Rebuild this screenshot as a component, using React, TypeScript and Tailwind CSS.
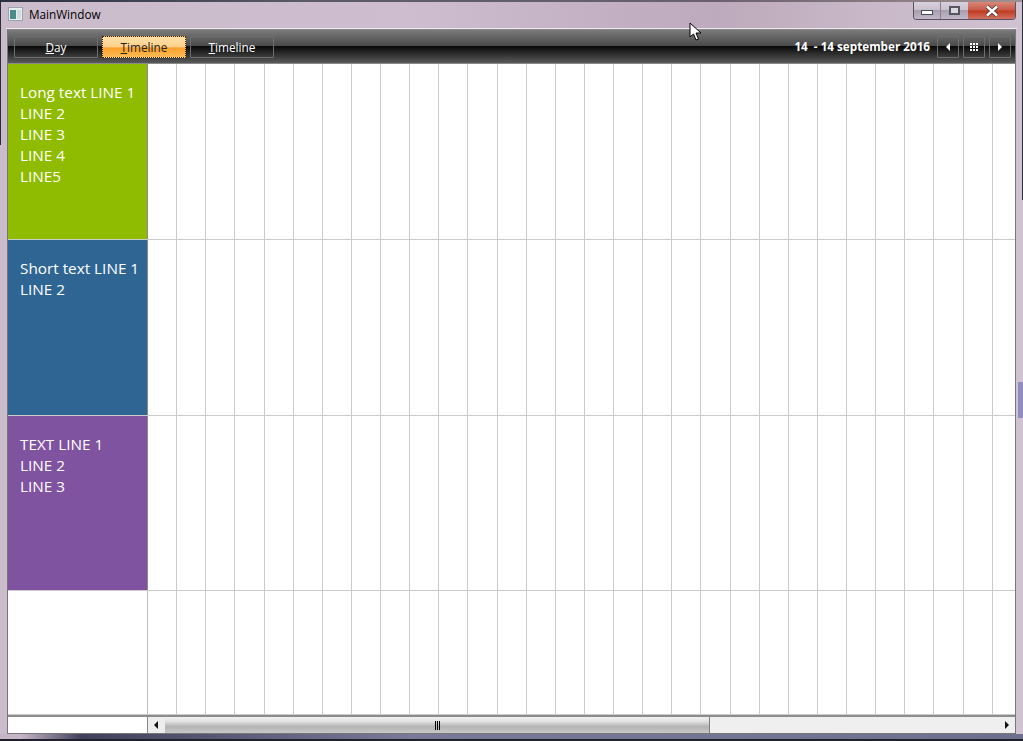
const columns = Array.from({ length: 30 }, (_, i) => i);

function Cells() {
  return (
    <div className="flex flex-1 overflow-hidden">
      {columns.map((c) => (
        <div key={c} className="w-[29.14px] shrink-0 border-r border-[#cbcbcb]" />
      ))}
    </div>
  );
}

function Row({ color, lines, className }: { color?: string; lines?: string[]; className: string }) {
  return (
    <div className={`flex border-b border-[#cbcbcb] ${className}`}>
      <div className={`w-[140px] shrink-0 border-r pl-[12px] pt-[18px] text-[15.3px] leading-[21px] text-white ${color ? `border-[#8a8a8a] ${color}` : "border-[#bdbdbd] bg-white"}`}>
        {lines?.map((l) => <div key={l}>{l}</div>)}
      </div>
      <Cells />
    </div>
  );
}

function ToolButton({ label, active, width }: { label: string; active?: boolean; width: string }) {
  return (
    <div
      className={`flex h-[22px] items-center justify-center border pt-[2px] text-[11.8px] ${width} ${
        active
          ? "border-dotted border-[#3a2a10] bg-[linear-gradient(#ffe0a8_0%,#ffcf8a_50%,#fb9f28_54%,#ffbb55_100%)] text-[#222]"
          : "rounded-[1px] border-[#6e6e6e] text-white"
      }`}
    >
      <span>
        <span className="underline">{label[0]}</span>
        {label.slice(1)}
      </span>
    </div>
  );
}

function NavButton({ children }: { children: React.ReactNode }) {
  return (
    <div className="flex h-[22px] w-[22px] items-center justify-center rounded-[1px] border border-[#6e6e6e]">
      {children}
    </div>
  );
}

export default function App() {
  return (
    <div className="relative flex h-[741px] w-[1023px] flex-col overflow-hidden bg-[linear-gradient(90deg,#cbbccb_0%,#cdbdcf_40%,#bdaabc_70%,#c8b8c8_85%,#d0c2d0_100%)] font-['Open_Sans',sans-serif]">
      {/* top edge */}
      <div className="h-[2px] bg-[linear-gradient(90deg,#2a3040_0%,#5a5a68_30%,#6a6070_70%,#a09090_100%)]" />
      {/* title bar */}
      <div className="flex h-[26px] items-start justify-between pl-[8px] pr-[7px]">
        <div className="flex items-center gap-[6px] pt-[4px]">
          <svg width="15" height="15" viewBox="0 0 15 15">
            <rect x="0.5" y="0.5" width="14" height="13" fill="#e8eef0" stroke="#9aa4aa" />
            <rect x="2" y="3" width="6" height="9" fill="#4a8a8a" />
            <rect x="9" y="3" width="4" height="9" fill="#d0dadf" />
          </svg>
          <span className="text-[11.75px] leading-[16px] text-black">MainWindow</span>
        </div>
        <div className="flex h-[18px] overflow-hidden rounded-b-[4px] border border-t-0 border-[#5a5060]">
          <div className="flex w-[27px] items-center justify-center border-r border-[#8a8090] bg-[linear-gradient(#d8d0dc_0%,#c8c0cc_48%,#a89eb0_50%,#c0b8c8_100%)]">
            <div className="mt-[4px] h-[5px] w-[12px] border border-[#4a4a50] bg-white" />
          </div>
          <div className="flex w-[27px] items-center justify-center bg-[linear-gradient(#d8d0dc_0%,#c8c0cc_48%,#a89eb0_50%,#c0b8c8_100%)]">
            <div className="h-[9px] w-[11px] border-2 border-[#56565e] bg-[#d8d8e0]" />
          </div>
          <div className="flex w-[47px] items-center justify-center bg-[linear-gradient(#d88878_0%,#c85848_48%,#c03a20_52%,#d07060_100%)]">
            <svg width="14" height="12" viewBox="0 0 14 12">
              <path d="M2 1.5 L12 10.5 M12 1.5 L2 10.5" stroke="#3a3a3a" strokeWidth="4" />
              <path d="M2 1.5 L12 10.5 M12 1.5 L2 10.5" stroke="#fff" strokeWidth="2.4" />
            </svg>
          </div>
        </div>
      </div>
      <div className="mx-[6px] h-px w-[1011px] bg-[#efe8ef]" />

      {/* client */}
      <div className="mx-[7px] flex h-[705px] w-[1009px] flex-col border-x border-b border-[#777] bg-white">
        {/* toolbar */}
        <div className="flex h-[35px] shrink-0 items-center justify-between border-b border-t border-[#8a8a8a] bg-[linear-gradient(#7a7a7a_0%,#4a4a4a_48%,#0a0a0a_50%,#1a1a1a_60%,#5a5a5a_100%)] pl-[6px] pr-[4px]">
          <div className="flex gap-[4px]">
            <ToolButton label="Day" width="w-[84px]" />
            <ToolButton label="Timeline" active width="w-[84px]" />
            <ToolButton label="Timeline" width="w-[84px]" />
          </div>
          <div className="flex items-center gap-[4px]">
            <span className="mr-[3px] whitespace-pre pt-[1px] text-[11.7px] font-bold text-white">14  - 14 september 2016</span>
            <NavButton>
              <svg width="6" height="8" viewBox="0 0 6 8"><path d="M5 0V8L1 4Z" fill="#fff" /></svg>
            </NavButton>
            <NavButton>
              <div className="grid h-[8px] w-[8px] grid-cols-3 grid-rows-3 gap-px">
                {Array.from({ length: 9 }, (_, i) => <div key={i} className="bg-white" />)}
              </div>
            </NavButton>
            <NavButton>
              <svg width="6" height="8" viewBox="0 0 6 8"><path d="M1 0V8L5 4Z" fill="#fff" /></svg>
            </NavButton>
          </div>
        </div>

        {/* rows */}
        <Row className="h-[176px] shrink-0" color="bg-[#8fbb00]" lines={["Long text LINE 1", "LINE 2", "LINE 3", "LINE 4", "LINE5"]} />
        <Row className="h-[176px] shrink-0" color="bg-[#2f6593]" lines={["Short text LINE 1", "LINE 2"]} />
        <Row className="h-[175px] shrink-0" color="bg-[#7f53a0]" lines={["TEXT LINE 1", "LINE 2", "LINE 3"]} />
        <Row className="min-h-0 flex-1" />

        {/* scrollbar */}
        <div className="flex h-[18px] shrink-0 border-t-2 border-[#8c8c8c]">
          <div className="w-[140px] shrink-0 border-r border-[#8a8a8a] bg-white" />
          <div className="flex w-[17px] items-center justify-center bg-[#ededed]">
            <svg width="5" height="8" viewBox="0 0 5 8"><path d="M4 0V8L0 4Z" fill="#111" /></svg>
          </div>
          <div className="flex flex-1 bg-[#efefef]">
            <div className="flex w-[545px] items-center justify-center border-r border-[#808080] bg-[linear-gradient(#f0f0f0_0%,#e4e4e4_25%,#b4b4b4_60%,#c8c8c8_100%)]">
              <div className="flex gap-px">
                <div className="h-[9px] w-px bg-black" />
                <div className="h-[9px] w-px bg-black" />
                <div className="h-[9px] w-px bg-black" />
              </div>
            </div>
            <div className="flex-1" />
          </div>
          <div className="flex w-[17px] items-center justify-center bg-[#efefef]">
            <svg width="5" height="8" viewBox="0 0 5 8"><path d="M1 0V8L5 4Z" fill="#111" /></svg>
          </div>
        </div>
      </div>

      {/* bottom frame */}
      <div className="flex-1 border-b-2 border-[#20202a] bg-[linear-gradient(90deg,#c6b6c8_0%,#c6b6c8_2%,#40405a_8%,#7a7a98_40%,#6e6e8e_100%)]" />

      {/* dark desktop edges showing at the window corners */}
      <div className="absolute left-0 top-0 h-[145px] w-px bg-[#2a2c3a]" />
      <div className="absolute right-0 top-0 h-[200px] w-[1px] bg-[#2a2c3a]" />
      <div className="absolute right-0 top-[382px] h-[36px] w-[5px] bg-[#8f8cc0]" />

      {/* mouse cursor */}
      <svg className="absolute left-[689px] top-[22px]" width="13" height="19" viewBox="0 0 13 19">
        <path d="M1 1V15L4.5 12L7 18L9.5 17L7 11H12Z" fill="#fff" stroke="#000" strokeWidth="1" />
      </svg>
    </div>
  );
}
